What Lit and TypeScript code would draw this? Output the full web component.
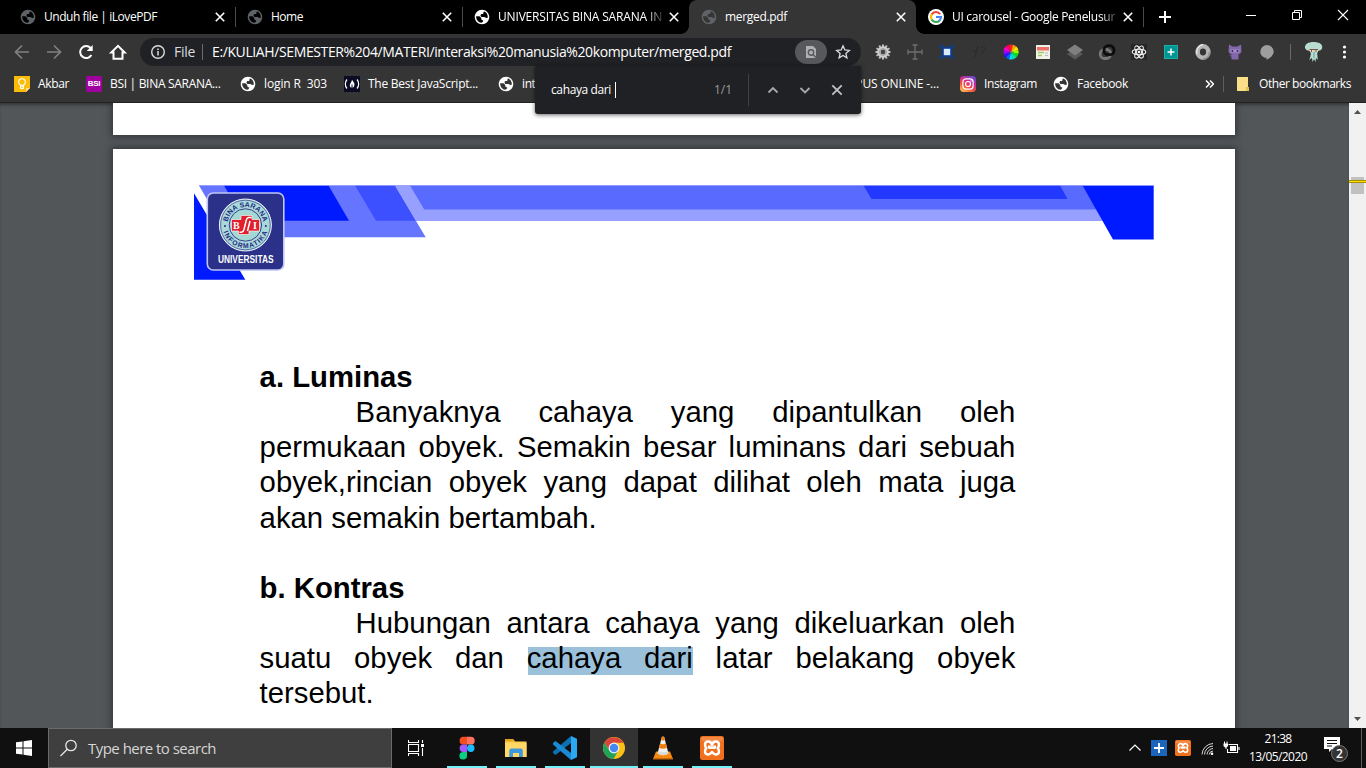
import { LitElement, html, svg, css } from "lit";
import { customElement, property } from "lit/decorators.js";
import { classMap } from "lit/directives/class-map.js";

/* Single-line label whose tracking is derived from the width it has to span. */
@customElement("ui-label")
class UiLabel extends LitElement {
  @property() text = "";
  @property({ type: Number }) span = 0;
  static styles = css`
    :host { display: inline-block; white-space: pre; }
    .t { display: inline-block; }
  `;
  render() {
    return html`<span class="t">${this.text}</span>`;
  }
  updated() {
    const t = this.renderRoot.querySelector(".t") as HTMLElement;
    t.style.letterSpacing = "0px";
    const natural = t.getBoundingClientRect().width;
    if (this.span && this.text.length) {
      t.style.letterSpacing = `${(this.span - natural) / this.text.length}px`;
    }
  }
}

const label = (text: string, span: number) => html`<ui-label .text=${text} .span=${span}></ui-label>`;
const icon = (w: number, h: number, body: unknown) =>
  html`<svg width=${w} height=${h} viewBox="0 0 ${w} ${h}" fill="none">${body}</svg>`;

const globe = (disc: string) => html`<svg width="16" height="16" viewBox="1 1 22 22">
  <path fill=${disc} d="M12 2C6.480 2 2 6.480 2 12s4.480 10 10 10 10-4.480 10-10S17.520 2 12 2zm-1 17.930c-3.950-.490-7-3.850-7-7.930 0-.3.030-.7.080-1H8.500L11 13.500v1.200c0 .9.6 1.500 1.500 1.800h1v1.500c-.4 1-1.400 1.700-2.500 1.930zM19.500 13c-.9.600-2 .3-2.800-.2-.5-.5-1-.8-1.700-.8h-3.500c-1-.3-1.500-1-1.500-2s.7-2 1.700-2h1.300c.6 0 1-.4 1-1V5.500c0-.6.400-1 1-.9 2.930 1.190 5 4.060 5 7.400 0 .4-.2.700-.5 1z"/></svg>`;

const google = icon(16, 16, svg`
  <circle cx="8" cy="8" r="8" fill="#fff"/>
  <path d="M12.100 5.200A5 5 0 0 0 3.700 5.500" stroke="#ea4335" stroke-width="2.100"/>
  <path d="M3.700 5.400A5 5 0 0 0 3.800 10.700" stroke="#fbbc05" stroke-width="2.100"/>
  <path d="M3.700 10.600A5 5 0 0 0 11.600 11.500" stroke="#34a853" stroke-width="2.100"/>
  <path d="M8 8H13A5 5 0 0 1 11.400 11.700" stroke="#4285f4" stroke-width="2.100"/>`);

const cross = (c = "#fff", s = 16, r = 4.2, w = 1.6) =>
  icon(s, s, svg`<path d="M${s / 2 - r} ${s / 2 - r}L${s / 2 + r} ${s / 2 + r}M${s / 2 + r} ${s / 2 - r}L${s / 2 - r} ${s / 2 + r}" stroke=${c} stroke-width=${w}/>`);

const xampp = (s: number) => html`<svg width=${s} height=${s} viewBox="0 0 24 24" fill="none">
  <rect width="24" height="24" rx="2.500" fill="#f0701e"/>
  <rect x="1" y="1" width="22" height="4" rx="2" fill="#f6a36c" opacity=".5"/>
  <path d="M12 9.200C11.600 6 9.500 5.400 7.600 5.600C4.400 6 4.400 10 6.400 12C4.400 14 4.400 18 7.600 18.400C9.800 18.600 10.600 17.400 12 16C13.400 17.400 14.200 18.600 16.400 18.400C19.600 18 19.600 14 17.600 12C19.600 10 19.600 6 16.400 5.600C14.500 5.400 12.400 6 12 9.200ZM9.300 9.500V11.800H14.700V9.500" stroke="#fff" stroke-width="2.500" stroke-linejoin="round"/></svg>`;

const rays = [0, 30, 60, 90, 120, 150, 180, 210, 240, 270, 300, 330];
const wheel = ["#ff2020", "#ff9a00", "#ffe600", "#9bff00", "#00e020", "#00e8a0", "#00d8ff", "#0060ff", "#3010ff", "#a000ff", "#ff00d0", "#ff0060"];

const extensions = [
  icon(20, 20, svg`${rays.map((a) => svg`<rect x="9" y="2.500" width="2" height="4" fill="#c0c0c0" transform="rotate(${a} 10 10)"/>`)}
    <circle cx="10" cy="10" r="5.800" fill="#cfcfcf"/><circle cx="10" cy="10" r="2.400" fill="#444"/><circle cx="10" cy="10" r="3.400" stroke="#999" stroke-width="1"/>`),
  icon(20, 20, svg`<path d="M10 3V17M7.500 3H12.500M7.500 17H12.500M3 10H17M3 7.500V12.500M17 7.500V12.500" stroke="#6f6f6f" stroke-width="1.300"/>`),
  icon(20, 20, svg`<path d="M5 2V18M15 2V18M2 5H18M2 15H18" stroke="#0b3f91" stroke-width="1.600" stroke-dasharray="2.200 1"/><rect x="5.500" y="5.500" width="9" height="9" fill="#0b3f91"/><rect x="6.800" y="6.800" width="6.400" height="6.400" fill="#d8eaff"/>`),
  icon(20, 20, svg`<path d="M4 16C8 16 6 5 10 4M4 9H9M12 6C15 3 18 7 14 9L13 12M12.500 15V16" stroke="#2d2d2d" stroke-width="1.300"/>`),
  icon(20, 20, svg`${rays.map((a, i) => svg`<path d="M10 10L8 2.700A7.600 7.600 0 0 1 12 2.700Z" fill=${wheel[i]} transform="rotate(${a} 10 10)"/>`)}<circle cx="10" cy="10" r="1" fill="#777"/>`),
  icon(20, 20, svg`<rect x="3" y="3" width="14" height="14" fill="#eef0ea"/><rect x="4" y="5" width="12" height="3.500" fill="#f07068"/><path d="M5 10.500H11M5 13.500H9" stroke="#a5c95a" stroke-width="1.500"/><path d="M12 11H15M12 13.500H15" stroke="#bbb"/>`),
  icon(20, 20, svg`<path d="M2 12L10 17.500L18 12L10 7Z" fill="#5a5a5a"/><path d="M2 8L10 13.500L18 8L10 2.500Z" fill="#808080"/>`),
  icon(20, 20, svg`<rect x="3.200" y="7.500" width="10.500" height="9" rx="4.300" stroke="#777" stroke-width="2.800"/><rect x="7" y="3.700" width="10" height="9" rx="4.300" stroke="#0c0c0c" stroke-width="2.800"/>`),
  icon(20, 20, svg`<rect x="2" y="2" width="16" height="16" fill="#262626"/><g stroke="#f2f2f2" stroke-width="1.100"><ellipse cx="10" cy="10" rx="6.800" ry="2.700"/><ellipse cx="10" cy="10" rx="6.800" ry="2.700" transform="rotate(60 10 10)"/><ellipse cx="10" cy="10" rx="6.800" ry="2.700" transform="rotate(120 10 10)"/></g><circle cx="10" cy="10" r="1.300" fill="#fff"/>`),
  icon(20, 20, svg`<rect x="3.500" y="3.500" width="13" height="13" fill="#009590" stroke="#19b0a8"/><path d="M10 6.500V13.500M6.500 10H13.500" stroke="#fff" stroke-width="1.500"/>`),
  icon(20, 20, svg`<ellipse cx="10" cy="10" rx="5.400" ry="5.700" stroke="#b4b4b4" stroke-width="4.600"/><path d="M10 2.500C5 4 3 8 4 12" stroke="#e6e6e6" stroke-width="1.500"/><path d="M10 17C14 17 17 13 16.500 10" stroke="#8e8e8e" stroke-width="1.500"/>`),
  icon(20, 20, svg`<path d="M4 2.500L7.500 4.500H12.500L16 2.500L16.500 9C16.500 11.500 14 12 13.500 12.500V17.500H6.500V15L4 13L6.500 13.500V12.500C5 12 3.500 11 3.500 9Z" fill="#8367ab"/><path d="M5.500 7.500H14.500V10.500H5.500Z" fill="#a48fc8"/><circle cx="7.500" cy="9" r="1" fill="#3b2a5c"/><circle cx="12.500" cy="9" r="1" fill="#3b2a5c"/>`),
  icon(20, 20, svg`<path d="M10 3A6.700 6.700 0 0 0 3.300 9.500C3.300 13.500 6.500 15.800 9.500 15.800V17.800C13.500 16 16.700 13 16.700 9.500A6.700 6.700 0 0 0 10 3Z" fill="#9e9e9e"/>`),
];

const instagram = html`<svg width="16" height="16" viewBox="0 0 16 16" fill="none">
  <defs><linearGradient id="ig" x1="0.150" y1="1" x2="0.750" y2="0"><stop offset="0" stop-color="#fdc450"/><stop offset=".35" stop-color="#f4553c"/><stop offset=".65" stop-color="#cf2b92"/><stop offset="1" stop-color="#6b46d8"/></linearGradient></defs>
  <rect width="16" height="16" rx="3.800" fill="url(#ig)"/><rect x="2.900" y="2.900" width="10.200" height="10.200" rx="3" stroke="#fff" stroke-width="1.200"/><circle cx="8" cy="8" r="2.500" stroke="#fff" stroke-width="1.200"/><circle cx="11" cy="5" r=".7" fill="#fff"/></svg>`;

const keep = icon(16, 16, svg`<path d="M0 0H16V12L12 16H0Z" fill="#fbbc09"/><path d="M12 16V12H16Z" fill="#ffe08a"/><circle cx="8" cy="6" r="3.300" stroke="#fff" stroke-width="1.100"/><path d="M6.500 9V12.500H9.500V9M6.500 10.800H9.500" stroke="#fff" stroke-width="1"/>`);
const bsi = html`<span class="bsi">BSI</span>`;
const fcc = icon(16, 16, svg`<rect width="16" height="16" fill="#0a0a23"/><path d="M3 3.500C.8 6 .8 10 3 12.500M13 3.500C15.200 6 15.200 10 13 12.500" stroke="#fff" stroke-width="1.200"/><path d="M8 3.800C9.500 6 11 7 10.300 9.500C10 11 9.200 11.700 8 11.800C6.500 11.700 5.600 10.600 5.800 9C6 7.600 7.500 6.500 8 3.800Z" fill="#fff"/><path d="M8 8.500V12" stroke="#0a0a23"/>`);

const tabs = [
  { fav: globe("#5f6368"), title: "Unduh file | iLovePDF", w: 113 },
  { fav: globe("#5f6368"), title: "Home", w: 32 },
  { fav: globe("#fff"), title: "UNIVERSITAS BINA SARANA IN", w: 164, fade: true },
  { fav: globe("#5f6368"), title: "merged.pdf", w: 62, active: true },
  { fav: google, title: "UI carousel - Google Penelusur", w: 163, fade: true },
];

const bookmarks = [
  { ic: keep, title: "Akbar", w: 31, slot: 31 },
  { ic: bsi, title: "BSI | BINA SARANA...", w: 110.5, slot: 113 },
  { ic: globe("#fff"), title: "login R  303", w: 63, slot: 63 },
  { ic: fcc, title: "The Best JavaScript...", w: 110, slot: 113 },
  { ic: globe("#fff"), title: "int", w: 13.5, slot: 267 },
  { ic: "", title: "KAMPUS ONLINE -...", w: 109, slot: 113 },
  { ic: instagram, title: "Instagram", w: 53, slot: 52 },
  { ic: globe("#fff"), title: "Facebook", w: 51, slot: 51 },
];

const figma = icon(32, 32, svg`<path d="M16 4.800H12.500A3.700 3.700 0 0 0 12.500 12.600H16Z" fill="#f24e1e"/><path d="M16 4.800H19.800A3.800 3.800 0 0 1 19.800 12.600H16Z" fill="#ff7262"/><path d="M16 12.600H12.300A3.700 3.700 0 0 0 12.300 20H16Z" fill="#a259ff"/><circle cx="19.800" cy="16.300" r="3.700" fill="#1abcfe"/><path d="M16 20H12.300A3.800 3.800 0 1 0 16 23.800Z" fill="#0acf83"/>`);
const explorer = icon(32, 32, svg`<path d="M5 7H13L15 9.500H26.500V25H5Z" fill="#ffcf52"/><path d="M5 7H13L15 9.500H5Z" fill="#e2a51d"/><path d="M5 11H26.500V25H5Z" fill="#ffd868"/><path d="M9.300 25V18.500A2 2 0 0 1 11.300 16.500H20.800A2 2 0 0 1 22.800 18.500V25H19V21H13V25Z" fill="#3f97dc"/>`);
const vscode = icon(32, 32, svg`<path d="M22 4V11L6.500 23L4 21V19.500Z" fill="#0d6fb4"/><path d="M22 28V21L6.500 9L4 11V12.500Z" fill="#1a8ad4"/><path d="M22 4L28 6.800V25.200L22 28Z" fill="#2aa8f2"/>`);
const chrome = icon(32, 32, svg`<circle cx="16" cy="16" r="11" fill="#fbc116"/><path d="M6.500 10.500A11 11 0 0 1 25.500 10.800H16L11.500 18.600Z" fill="#d9453b"/><path d="M6.500 10.500A11 11 0 0 0 15.500 27L20.400 18.500H11.300Z" fill="#1fa35a"/><circle cx="16" cy="16" r="5.400" fill="#f3f3f3"/><circle cx="16" cy="16" r="4.200" fill="#4688f1"/>`);
const vlc = icon(32, 32, svg`<path d="M9 19.500H23L26 27H6Z" fill="#f58a12"/><path d="M6 26H26V27.500H6Z" fill="#c8670a"/><path d="M14.800 5Q16 3.800 17.200 5L21.500 21.500Q16 25 10.500 21.500Z" fill="#f0f0f0"/><path d="M14.800 5Q16 3.800 17.200 5L18 8Q16 9 14 8Z" fill="#ef7d10"/><path d="M13.100 11.500Q16 13 18.900 11.500L20 15.700Q16 18 12 15.700Z" fill="#ef7d10"/><path d="M11.200 19Q16 21.500 20.800 19L21.500 21.500Q16 25 10.500 21.500Z" fill="#d9d9d9"/>`);

const apps = [
  { ic: figma },
  { ic: explorer },
  { ic: vscode },
  { ic: chrome, active: true },
  { ic: vlc },
  { ic: xampp(24) },
];

@customElement("browser-chrome")
class BrowserChrome extends LitElement {
  static styles = css`
    :host { display: block; position: relative; z-index: 2; font: 12px/16px "Open Sans", "Noto Sans", sans-serif; color: #fff; }
    svg { display: block; flex: none; }
    .strip { height: 34px; background: #000; display: flex; padding-left: 8px; }
    .tab { width: 227px; box-sizing: border-box; display: flex; align-items: center; padding: 0 7px 0 12px; position: relative; }
    .tab .title { width: 165px; margin-left: 8px; display: flex; }
    .tab .fade { -webkit-mask-image: linear-gradient(90deg, #000 90%, rgba(0,0,0,.15)); mask-image: linear-gradient(90deg, #000 90%, rgba(0,0,0,.15)); }
    .tab .x { margin-left: 3px; }
    .tab.sep::after { content: ""; position: absolute; right: -1px; top: 7px; width: 1px; height: 20px; background: #4a4a4a; }
    .active { background: #353535; border-radius: 8px 8px 0 0; }
    .active::before, .active::after { content: ""; position: absolute; bottom: 0; width: 8px; height: 8px; }
    .active::before { left: -8px; background: radial-gradient(circle at 0 0, transparent 7.500px, #353535 8px); }
    .active::after { right: -8px; background: radial-gradient(circle at 100% 0, transparent 7.500px, #353535 8px); }
    .new { display: flex; align-items: center; margin-left: 14px; }
    .win { margin-left: auto; display: flex; }
    .win span { width: 46px; height: 29px; display: grid; place-items: center; }
    .bar { background: #353535; height: 36px; display: flex; align-items: center; padding-left: 12px; }
    .nav { display: flex; gap: 12px; }
    .omni { margin-left: 12px; width: 721px; height: 28px; box-sizing: border-box; border-radius: 14px; background: #202124; display: flex; align-items: center; font-size: 14px; padding: 0 10px; }
    .file { margin-left: 8px; color: #dadce0; width: 21px; }
    .vr { width: 1px; height: 16px; background: #6b6c6f; margin: 0 10px 0 7px; }
    .vr.w { margin: 0 9px 0 7px; }
    .url { flex: 1; }
    .pill { width: 32px; height: 24px; border-radius: 12px; background: #56585c; display: grid; place-items: center; margin-right: 8px; }
    .ext { display: flex; gap: 12px; margin-left: 12px; }
    .ext + .vr { background: #6a6a6a; margin: 0 12px 0 13px; }
    .marks { background: #353535; height: 33px; box-sizing: border-box; border-bottom: 1px solid #222; display: flex; align-items: center; padding: 0 15px 4px 14px; }
    .mark { display: flex; align-items: center; margin-right: 17px; }
    .ic { width: 16px; height: 16px; margin-right: 8px; }
    .slot { white-space: nowrap; }
    .bsi { display: grid; place-items: center; width: 16px; height: 16px; border-radius: 2px; background: #a100a1; font: 700 8px/16px "Liberation Sans", sans-serif; letter-spacing: -.3px; }
    .more { margin-left: auto; display: flex; align-items: center; }
    .more .vr { margin: 0 13px 0 9px; background: #5e5e5e; }
    .more ui-label { margin-left: 10px; }
    .find { position: absolute; left: 535px; top: 66px; width: 326px; height: 48px; box-sizing: border-box; background: #202124; border-radius: 0 0 3px 3px; box-shadow: 0 1px 4px rgba(0,0,0,.6); display: flex; align-items: center; padding: 0 14px 0 16px; }
    .caret { width: 1px; height: 16px; background: #fff; margin-left: 4px; }
    .count { margin-left: auto; color: #9a9a98; }
    .find .vr { height: 32px; background: #3f4145; margin: 0 14px 0 16px; }
    .btns { display: flex; gap: 12px; }
  `;
  render() {
    return html`
      <div class="strip">
        ${tabs.map((t, i) => html`<div class=${classMap({ tab: true, active: !!t.active, sep: i < 2 || i === 4 })}>
          ${t.fav}<div class=${classMap({ title: true, fade: !!t.fade })}>${label(t.title, t.w)}</div><div class="x">${cross()}</div></div>`)}
        <div class="new">${icon(16, 16, svg`<path d="M8 2V14M2 8H14" stroke="#fff" stroke-width="2"/>`)}</div>
        <div class="win">
          <span>${icon(12, 12, svg`<path d="M1 6.500H11" stroke="#fff"/>`)}</span>
          <span>${icon(12, 12, svg`<path d="M1.500 3.500H8.500V10.500H1.500ZM3.500 3.500V1.500H10.500V8.500H8.500" stroke="#fff"/>`)}</span>
          <span>${cross("#fff", 12, 5, 1.1)}</span>
        </div>
      </div>
      <div class="bar">
        <div class="nav">
          ${icon(20, 20, svg`<path d="M17 10H4M10 3.500L3.500 10L10 16.500" stroke="#818181" stroke-width="1.700"/>`)}
          ${icon(20, 20, svg`<path d="M3 10H16M10 3.500L16.500 10L10 16.500" stroke="#818181" stroke-width="1.700"/>`)}
          ${icon(20, 20, svg`<path d="M15.400 13A6 6 0 1 1 14.600 6" stroke="#fff" stroke-width="2"/><path d="M16.700 3V9H10.700Z" fill="#fff"/>`)}
          ${icon(20, 20, svg`<path d="M3.300 10.500L10 3.800L16.700 10.500H14.500V16.800H5.500V10.500Z" stroke="#fff" stroke-width="2"/>`)}
        </div>
        <div class="omni">
          ${icon(16, 16, svg`<circle cx="8" cy="8" r="6.300" stroke="#dadce0" stroke-width="1.400"/><path d="M8 7V11.500M8 4.400V6" stroke="#dadce0" stroke-width="1.500"/>`)}
          <span class="file">${label("File", 21)}</span><span class="vr w"></span>
          <span class="url">${label("E:/KULIAH/SEMESTER%204/MATERI/interaksi%20manusia%20komputer/merged.pdf", 519)}</span>
          <span class="pill">${icon(16, 16, svg`<path d="M3 2H10L13 5V14H3Z" fill="#aeb0b3"/><circle cx="8" cy="8.500" r="2.700" stroke="#56585c" stroke-width="1.400"/><path d="M10 10.500L13 13.500" stroke="#56585c" stroke-width="1.400"/>`)}</span>
          ${icon(16, 16, svg`<path d="M8 1.800L9.800 6L14.300 6.400L10.900 9.400L11.900 13.800L8 11.500L4.100 13.800L5.100 9.400L1.700 6.400L6.200 6Z" stroke="#dadce0" stroke-width="1.300"/>`)}
        </div>
        <div class="ext">${extensions}</div><span class="vr"></span>
        ${icon(22, 22, svg`<path d="M2 7C1.500 3 5.500 1 10.500 1S20.500 3 19 7.500C18 10 15.500 9 15 10.500L14 13C15 15 14 16 15 19L13 17L12.500 21L11 18L9.500 21L9 17L6 19C8 16 7 15 8 13L7 10.500C6 9 3.500 10.500 2 7Z" fill="#b9dcd2"/><path d="M7 9.500H10M12 9.500H15" stroke="#e8dfa0" stroke-width="2"/><path d="M8.500 9V11M13 9V11M6.500 8.500H15" stroke="#7b3b3b" stroke-width=".9"/><path d="M11 11V17" stroke="#7fb3a8" stroke-width="1.500"/>`)}
        <span class="ext">${icon(16, 16, svg`<circle cx="7.500" cy="3" r="1.600" fill="#fff"/><circle cx="7.500" cy="8" r="1.600" fill="#fff"/><circle cx="7.500" cy="13" r="1.600" fill="#fff"/>`)}</span>
      </div>
      <div class="marks">
        ${bookmarks.map((b) => html`<div class="mark"><div class="ic">${b.ic}</div><div class="slot" style="width:${b.slot}px">${label(b.title, b.w)}</div></div>`)}
        <div class="more">
          ${icon(10, 10, svg`<path d="M2 1.500L5.500 5L2 8.500M6 1.500L9.500 5L6 8.500" stroke="#fff" stroke-width="1.500"/>`)}
          <span class="vr"></span>
          ${icon(12, 14, svg`<path d="M0 0H11V11L12 14H0Z" fill="#fbe08a"/><path d="M9 10H12V14H9Z" fill="#eac04c"/>`)}
          ${label("Other bookmarks", 92)}
        </div>
      </div>
      <div class="find">
        ${label("cahaya dari", 60)}<span class="caret"></span>
        <span class="count">${label("1/1", 18)}</span><span class="vr"></span>
        <div class="btns">
          ${icon(20, 20, svg`<path d="M5.500 12.500L10 8L14.500 12.500" stroke="#a6a9ad" stroke-width="1.800"/>`)}
          ${icon(20, 20, svg`<path d="M5.500 8L10 12.500L14.500 8" stroke="#a6a9ad" stroke-width="1.800"/>`)}
          ${cross("#c0c3c7", 20, 4.700, 1.800)}
        </div>
      </div>`;
  }
}

@customElement("pdf-view")
class PdfView extends LitElement {
  static styles = css`
    :host { display: flex; height: 625px; background: #525659; overflow: hidden; }
    .doc { flex: 1; height: 625px; overflow: hidden; padding-left: 113px; box-shadow: inset 0 3px 3px -1px rgba(0,0,0,.35); }
    .sheet { width: 1122px; background: #fff; box-shadow: 0 0 6px 2px rgba(30,33,36,.55); }
    .prev { height: 32px; margin-bottom: 14px; }
    .page { height: 700px; box-sizing: border-box; padding: 36px 0 0 81px; }
    .head { display: block; }
    .body { margin: 78px 0 0 65.600px; width: 755.700px; font: 29.300px/35.150px "Liberation Sans", Arial, sans-serif; color: #000; }
    .body div { height: 35.150px; white-space: nowrap; }
    .body .j { text-align: justify; text-align-last: justify; white-space: normal; }
    .body .in { padding-left: 96px; }
    .b { font-weight: 700; }
    .hit { background: linear-gradient(#9ac0da, #9ac0da) 1px 5.500px / calc(100% - 1px) 28px no-repeat; padding-bottom: 1px; }
    .logo { font-family: "Liberation Sans", Arial, sans-serif; font-weight: 700; }
    .scroll { width: 17px; background: #f1f1f1; display: flex; flex-direction: column; justify-content: space-between; align-items: center; position: relative; }
    .scroll svg { display: block; }
    .thumb { position: absolute; left: 2px; top: 74px; width: 13px; height: 17px; background: #c1c1c1; }
    .tick { position: absolute; left: 0; top: 77px; width: 17px; height: 3px; box-sizing: border-box; background: #ffde00; border: solid #a88f00; border-width: 1px 0; }
  `;
  render() {
    return html`
      <div class="doc">
        <div class="sheet prev"></div>
        <div class="sheet page">
          <svg class="head" width="962" height="96" viewBox="194 185 962 96">
            <path d="M194 193.300V279.800H245.300Z" fill="#001aff"/>
            <path d="M199 185.500H395L425.700 237.300H229Z" fill="#6675ff"/>
            <path d="M224 185.500H328.500L349 220.700H244.500Z" fill="#001aff"/>
            <path d="M355 185.500H395L416 220.700H376Z" fill="#3d50ff"/>
            <path d="M395 185.500H1083L1103 221H416Z" fill="#979fff"/>
            <path d="M410 185.500H1083L1096.500 209.500H424.300Z" fill="#596aff"/>
            <path d="M863.500 185.500H1060L1067.500 199H871.500Z" fill="#2238ff"/>
            <path d="M1082.500 185.500H1153.700V239.500H1113Z" fill="#001aff"/>
            <path d="M199 185.500H1153.500" stroke="#8f99ff" stroke-width=".8"/>
            <g class="logo">
              <rect x="207.300" y="193" width="76.500" height="77" rx="6" fill="#2b3188" stroke="#bfc6f4" stroke-width="1.600"/>
              <circle cx="245.400" cy="225" r="26" fill="#a9d8da" stroke="#eef4fa" stroke-width="1"/>
              <circle cx="245.400" cy="225" r="24.800" fill="none" stroke="#39408f" stroke-width=".7"/>
              <circle cx="245.400" cy="225" r="16.200" fill="#a4d8d4" stroke="#39408f" stroke-width="1"/>
              <defs><path id="up" d="M227.400 225A18 18 0 0 1 263.400 225"/><path id="dn" d="M222.400 225A23 23 0 0 0 268.400 225"/></defs>
              <text font-size="7" fill="#232a80"><textPath href="#up" startOffset="50%" text-anchor="middle" textLength="50">BINA SARANA</textPath></text>
              <text font-size="6.800" fill="#232a80"><textPath href="#dn" startOffset="50%" text-anchor="middle" textLength="58">INFORMATIKA</textPath></text>
              <circle cx="225" cy="226" r="1" fill="#232a80"/><circle cx="265.800" cy="226" r="1" fill="#232a80"/>
              <path d="M231.500 219.500H241V215.500H252V219.500H259.500V231H249V234.500H238.500V231H231.500Z" fill="#e21f2c" stroke="#f5eef0" stroke-width=".7"/>
              <text x="233" y="229" font-size="10" fill="#fff" font-family="Liberation Serif, serif">B</text>
              <text x="253" y="229" font-size="10" fill="#fff" font-family="Liberation Serif, serif">I</text>
              <path d="M251.500 217.500H248.500Q246.500 218 246.200 220.500L244 229.500Q243.300 232 241.500 232.300H239.500M250 221L247.500 231" fill="none" stroke="#fff" stroke-width="1.500"/>
              <text x="218" y="263.300" font-size="10.500" fill="#fff" textLength="55.500" lengthAdjust="spacingAndGlyphs">UNIVERSITAS</text>
            </g>
          </svg>
          <div class="body">
            <div class="b">a. Luminas</div>
            <div class="j in">Banyaknya cahaya yang dipantulkan oleh</div>
            <div class="j">permukaan obyek. Semakin besar luminans dari sebuah</div>
            <div class="j">obyek,rincian obyek yang dapat dilihat oleh mata juga</div>
            <div>akan semakin bertambah.</div>
            <div></div>
            <div class="b">b. Kontras</div>
            <div class="j in">Hubungan antara cahaya yang dikeluarkan oleh</div>
            <div class="j">suatu obyek dan <span class="hit">cahaya dari</span> latar belakang obyek</div>
            <div>tersebut.</div>
          </div>
        </div>
      </div>
      <div class="scroll">
        ${icon(17, 17, svg`<path d="M5 11L8.500 7L12 11Z" fill="#505050"/>`)}
        <div class="thumb"></div><div class="tick"></div>
        ${icon(17, 17, svg`<path d="M5 6L8.500 10L12 6Z" fill="#505050"/>`)}
      </div>`;
  }
}

@customElement("task-bar")
class TaskBar extends LitElement {
  static styles = css`
    :host { display: flex; height: 40px; background: #101010; color: #fff; font: 12px/16px "Open Sans", "Noto Sans", sans-serif; }
    svg { display: block; flex: none; }
    .cell { width: 48px; height: 40px; display: grid; place-items: center; box-sizing: border-box; }
    .search { width: 344px; box-sizing: border-box; height: 40px; background: #3f3f3f; border: 1px solid #6b6b6b; display: flex; align-items: center; padding-left: 10px; font-size: 15px; color: #d6d6d6; gap: 9px; }
    .apps { display: flex; gap: 1px; margin-left: 3px; }
    .app { position: relative; }
    .app::after { content: ""; position: absolute; left: 4px; right: 4px; bottom: 0; height: 2px; background: #76f0fa; }
    .app.on { background: #333; }
    .app.on::after { left: 0; right: 0; }
    .tray { margin-left: auto; display: flex; align-items: center; }
    .tray > svg { margin-right: 8px; }
    .clock { width: 58px; display: flex; flex-direction: column; align-items: center; gap: 2px; margin: -1px 0 0 1px; }
    .note { margin-left: 17px; position: relative; width: 27px; height: 28px; }
    .badge { position: absolute; left: 7px; top: 11px; width: 15px; height: 15px; border-radius: 50%; border: 1px solid #777; background: #333; font-weight: 600; text-align: center; line-height: 15px; }
    .edge { width: 1px; height: 40px; background: #5c5c5c; margin: 0 4px 0 10px; }
  `;
  render() {
    return html`
      <div class="cell">${icon(16, 16, svg`<path d="M0 2.300L6.500 1.400V7.500H0ZM7.500 1.200L16 0V7.500H7.500ZM0 8.500H6.500V14.600L0 13.700ZM7.500 8.500H16V16L7.500 14.800Z" fill="#fff"/>`)}</div>
      <div class="search">${icon(20, 20, svg`<circle cx="12" cy="7.500" r="5.200" stroke="#e6e6e6" stroke-width="1.300"/><path d="M8.300 11.300L1.500 18" stroke="#e6e6e6" stroke-width="1.300"/>`)}${label("Type here to search", 128)}</div>
      <div class="cell">${icon(16, 16, svg`<path d="M.5 0V2.500H10.500V0M.5 16V13.500H10.500V16M.5 4.500H10.500V11.500H.500ZM14.500 0V3M14.500 8V16" stroke="#fff" stroke-width="1.100"/><rect x="13" y="4" width="3" height="3" fill="#fff"/>`)}</div>
      <div class="apps">${apps.map((a) => html`<div class=${classMap({ cell: true, app: true, on: !!a.active })}>${a.ic}</div>`)}</div>
      <div class="tray">
        ${icon(16, 16, svg`<path d="M2.500 10.500L8 5L13.500 10.500" stroke="#fff" stroke-width="1.200"/>`)}
        ${icon(16, 16, svg`<rect width="16" height="16" fill="#1b66bd"/><path d="M8 3V13M3 8H13" stroke="#fff" stroke-width="1.800"/>`)}
        ${xampp(16)}
        ${icon(16, 16, svg`<path d="M3 14.500A11.500 11.500 0 0 1 14 3.500M5.500 14.500A9 9 0 0 1 14 6M8 14.500A6.500 6.500 0 0 1 14 8.500M10.200 14.500A4 4 0 0 1 14 11" stroke="#d8d8d8" stroke-width="1"/><circle cx="13" cy="13.700" r="1.300" fill="#fff"/>`)}
        ${icon(17, 16, svg`<path d="M5.500 4.500H14.500V12.500H4.500V9M16 7V10" stroke="#fff" stroke-width="1.100"/><rect x="7" y="6" width="6" height="5" fill="#fff"/><path d="M1.500 1.500V4M4 1.500V4M3 6V9" stroke="#fff" stroke-width="1"/><path d="M.5 3.500H5V6L3.500 7.500H2L.5 6Z" fill="#fff"/>`)}
        <div class="clock">${label("21:38", 27)}${label("13/05/2020", 58)}</div>
        <div class="note">${icon(18, 18, svg`<path d="M0 3H16V15H8L5 18V15H0Z" fill="#fff"/><path d="M3 6.500H13M3 9.500H13M3 12H8" stroke="#101010"/>`)}<span class="badge">2</span></div>
        <div class="edge"></div>
      </div>`;
  }
}

@customElement("app-root")
class AppRoot extends LitElement {
  static styles = css`
    :host { display: block; width: 1366px; height: 768px; overflow: hidden; background: #101010; }
  `;
  render() {
    return html`<browser-chrome></browser-chrome><pdf-view></pdf-view><task-bar></task-bar>`;
  }
}
